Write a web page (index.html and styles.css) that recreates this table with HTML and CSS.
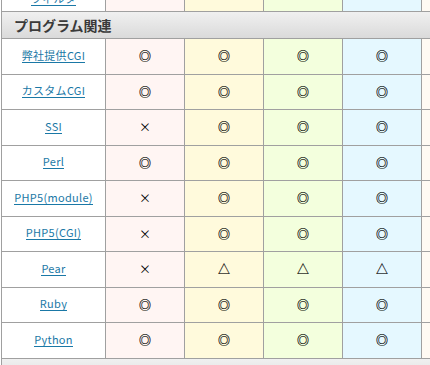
FILE: index.html
```html
<!DOCTYPE html>
<html lang="ja">
<head>
<meta charset="utf-8">
<title>プログラム関連</title>
<link rel="stylesheet" href="styles.css">
</head>
<body>
<div class="sheet">
  <div class="row partial">
    <div class="cell name"><a class="link" href="#">フィルタ</a></div>
    <div class="cell c-pink"></div>
    <div class="cell c-cream"></div>
    <div class="cell c-green"></div>
    <div class="cell c-blue"></div>
    <div class="cell c-ivory"></div>
  </div>
  <div class="section-title">プログラム関連</div>
  <div class="row">
    <div class="cell name"><a class="link" href="#">弊社提供CGI</a></div>
    <div class="cell c-pink o">◎</div><div class="cell c-cream o">◎</div><div class="cell c-green o">◎</div><div class="cell c-blue o">◎</div><div class="cell c-ivory"></div>
  </div>
  <div class="row">
    <div class="cell name"><a class="link" href="#">カスタムCGI</a></div>
    <div class="cell c-pink o">◎</div><div class="cell c-cream o">◎</div><div class="cell c-green o">◎</div><div class="cell c-blue o">◎</div><div class="cell c-ivory"></div>
  </div>
  <div class="row">
    <div class="cell name"><a class="link" href="#">SSI</a></div>
    <div class="cell c-pink x">×</div><div class="cell c-cream o">◎</div><div class="cell c-green o">◎</div><div class="cell c-blue o">◎</div><div class="cell c-ivory"></div>
  </div>
  <div class="row">
    <div class="cell name"><a class="link" href="#">Perl</a></div>
    <div class="cell c-pink o">◎</div><div class="cell c-cream o">◎</div><div class="cell c-green o">◎</div><div class="cell c-blue o">◎</div><div class="cell c-ivory"></div>
  </div>
  <div class="row">
    <div class="cell name"><a class="link" href="#">PHP5(module)</a></div>
    <div class="cell c-pink x">×</div><div class="cell c-cream o">◎</div><div class="cell c-green o">◎</div><div class="cell c-blue o">◎</div><div class="cell c-ivory"></div>
  </div>
  <div class="row">
    <div class="cell name"><a class="link" href="#">PHP5(CGI)</a></div>
    <div class="cell c-pink x">×</div><div class="cell c-cream o">◎</div><div class="cell c-green o">◎</div><div class="cell c-blue o">◎</div><div class="cell c-ivory"></div>
  </div>
  <div class="row">
    <div class="cell name"><a class="link" href="#">Pear</a></div>
    <div class="cell c-pink x">×</div><div class="cell c-cream t">△</div><div class="cell c-green t">△</div><div class="cell c-blue t">△</div><div class="cell c-ivory"></div>
  </div>
  <div class="row">
    <div class="cell name"><a class="link" href="#">Ruby</a></div>
    <div class="cell c-pink o">◎</div><div class="cell c-cream o">◎</div><div class="cell c-green o">◎</div><div class="cell c-blue o">◎</div><div class="cell c-ivory"></div>
  </div>
  <div class="row">
    <div class="cell name"><a class="link" href="#">Python</a></div>
    <div class="cell c-pink o">◎</div><div class="cell c-cream o">◎</div><div class="cell c-green o">◎</div><div class="cell c-blue o">◎</div><div class="cell c-ivory"></div>
  </div>
  <div class="section-title">データベース関連</div>
</div>
</body>
</html>
```

FILE: styles.css
```css
html, body {
  margin: 0;
  padding: 0;
  overflow: hidden;
  background: #ffffff;
}

.sheet {
  width: 500px;
  padding-left: 1px;
  font-family: "Noto Sans CJK JP", "Noto Sans", sans-serif;
}

.row {
  display: grid;
  grid-template-columns: 104px repeat(5, 79px);
  height: 35.5px;
  box-sizing: border-box;
  border-left: 1px solid #a0a0a0;
  border-bottom: 1px solid #a0a0a0;
}

.row.partial {
  height: 30px;
  margin-top: -18px;
}

.cell {
  display: flex;
  align-items: center;
  justify-content: center;
  border-right: 1px solid #a0a0a0;
  font-family: "Noto Sans CJK JP", sans-serif;
  font-size: 11px;
  line-height: 12px;
  color: #000000;
}

.cell.o,
.cell.t {
  font-size: 12px;
  -webkit-text-stroke: 0.2px #000000;
}

.cell.x {
  font-size: 12px;
}

.partial .cell {
  align-items: flex-end;
  padding-bottom: 5px;
}

.name { background: #ffffff; }
.c-pink { background: #fff5f3; }
.c-cream { background: #fffadc; }
.c-green { background: #f3ffdd; }
.c-blue { background: #e5f8ff; }
.c-ivory { background: #fffaf3; }

.link {
  display: inline-block;
  font-family: "Noto Sans CJK JP", "Noto Sans", sans-serif;
  font-size: 11px;
  line-height: 11px;
  letter-spacing: 0.3px;
  color: #1a78a6;
  text-decoration: none;
  border-bottom: 1px solid #1a78a6;
  padding-bottom: 1px;
}

.section-title {
  display: flex;
  align-items: center;
  height: 27px;
  box-sizing: border-box;
  padding-left: 12px;
  border-left: 1px solid #a0a0a0;
  border-bottom: 1px solid #a0a0a0;
  background: linear-gradient(#f0f0f0, #dadada);
  font-size: 14px;
  font-weight: bold;
  color: #3a3a3a;
}
```
